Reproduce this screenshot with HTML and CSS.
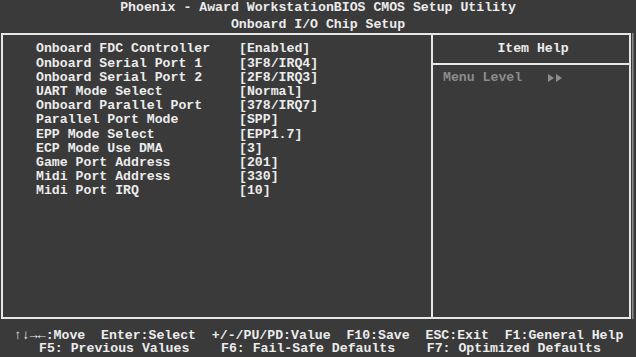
FILE: index.html
```html
<!DOCTYPE html>
<html lang="en">
<head>
    <meta charset="UTF-8">
    <title>Onboard I/O Chip Setup</title>
    <link rel="stylesheet" href="styles.css">
</head>
<body>
    <div class="screen">
        <header class="title">
            <div>Phoenix - Award WorkstationBIOS CMOS Setup Utility</div>
            <div>Onboard I/O Chip Setup</div>
        </header>

        <main class="frame">
            <section class="items">
                <div class="row"><span class="label">Onboard FDC Controller</span><span class="value">[Enabled]</span></div>
                <div class="row"><span class="label">Onboard Serial Port 1</span><span class="value">[3F8/IRQ4]</span></div>
                <div class="row"><span class="label">Onboard Serial Port 2</span><span class="value">[2F8/IRQ3]</span></div>
                <div class="row"><span class="label">UART Mode Select</span><span class="value">[Normal]</span></div>
                <div class="row"><span class="label">Onboard Parallel Port</span><span class="value">[378/IRQ7]</span></div>
                <div class="row"><span class="label">Parallel Port Mode</span><span class="value">[SPP]</span></div>
                <div class="row"><span class="label">EPP Mode Select</span><span class="value">[EPP1.7]</span></div>
                <div class="row"><span class="label">ECP Mode Use DMA</span><span class="value">[3]</span></div>
                <div class="row"><span class="label">Game Port Address</span><span class="value">[201]</span></div>
                <div class="row"><span class="label">Midi Port Address</span><span class="value">[330]</span></div>
                <div class="row"><span class="label">Midi Port IRQ</span><span class="value">[10]</span></div>
            </section>

            <aside class="help">
                <div class="help-title">Item Help</div>
                <div class="help-body">
                    <span>Menu Level</span>
                    <svg class="level" width="16" height="8" viewBox="0 0 16 8">
                        <polygon points="0,0 6,4 0,8" />
                        <polygon points="8,0 14,4 8,8" />
                    </svg>
                </div>
            </aside>
        </main>

        <footer class="keys">
            <div class="keys-main">↑↓→←:Move  Enter:Select  +/-/PU/PD:Value  F10:Save  ESC:Exit  F1:General Help</div>
            <div class="keys-extra">F5: Previous Values    F6: Fail-Safe Defaults    F7: Optimized Defaults</div>
        </footer>
    </div>
</body>
</html>
```

FILE: styles.css
```css
body {
    margin: 0;
    padding: 0;
    background-color: #3a3a3a;
}
.screen {
    width: 636px;
    height: 357px;
    overflow: hidden;
    background-color: #3a3a3a;
    color: #ececec;
    font-family: "Liberation Mono", "DejaVu Sans Mono", monospace;
    font-size: 13.2px;
    font-weight: bold;
}
.title {
    text-align: center;
    line-height: 16.5px;
}
.frame {
    display: flex;
    box-sizing: border-box;
    width: 630px;
    height: 285.5px;
    margin-left: 1px;
    border: 2px solid #e6e6e6;
    box-shadow: 1px 0 0 0 #3a3a3a, 2.5px 0 0 0 #8a8a8a;
}
.items {
    width: 428px;
    padding: 7.3px 0 0 33px;
    box-sizing: border-box;
    line-height: 14.2px;
}
.row {
    display: flex;
    white-space: pre;
}
.label {
    width: 203px;
}
.help {
    flex: 1;
    border-left: 2px solid #e6e6e6;
}
.help-title {
    text-align: center;
    line-height: 14.2px;
    padding: 7.3px 0 6.2px 4px;
    border-bottom: 2px solid #e6e6e6;
}
.help-body {
    display: flex;
    align-items: center;
    padding: 6.1px 0 0 10px;
    line-height: 14.2px;
    color: #8c8c8c;
    white-space: pre;
}
.level {
    margin-left: 26px;
    fill: #8c8c8c;
}
.keys {
    padding-top: 10px;
    line-height: 13.2px;
}
.keys-main {
    padding-left: 14px;
    white-space: pre;
}
.keys-extra {
    padding-left: 39px;
    white-space: pre;
}
```
